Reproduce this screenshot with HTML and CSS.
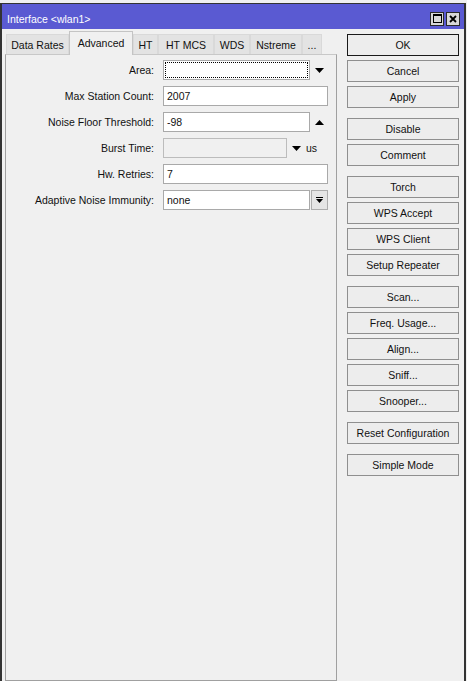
FILE: index.html
```html
<!DOCTYPE html>
<html>
<head>
<meta charset="utf-8">
<title>Interface &lt;wlan1&gt;</title>
<link rel="stylesheet" href="styles.css">
</head>
<body>
<div class="window">
  <div class="titlebar">
    <span class="title">Interface &lt;wlan1&gt;</span>
    <div class="wbtns">
      <span class="wbtn"><svg width="9" height="9" viewBox="0 0 9 9"><rect x="0.5" y="0.5" width="8" height="8" fill="none" stroke="#000"/><rect x="0" y="0" width="9" height="2" fill="#000"/></svg></span>
      <span class="wbtn"><svg width="8" height="8" viewBox="0 0 8 8"><path d="M1 1L7 7M7 1L1 7" stroke="#000" stroke-width="1.8"/></svg></span>
    </div>
  </div>
  <div class="body">
    <div class="left">
      <div class="tabs">
        <div class="tab t-rates">Data Rates</div>
        <div class="tab active t-adv">Advanced</div>
        <div class="tab t-ht">HT</div>
        <div class="tab t-mcs">HT MCS</div>
        <div class="tab t-wds">WDS</div>
        <div class="tab t-nst">Nstreme</div>
        <div class="tab t-more">...</div>
      </div>
      <div class="panel">
        <div class="row">
          <span class="lbl">Area:</span>
          <div class="box combo w-short"><span class="focus"></span></div>
          <span class="arrow"><svg width="9" height="5" viewBox="0 0 9 5"><path d="M0 0H9L4.5 5Z"/></svg></span>
        </div>
        <div class="row">
          <span class="lbl">Max Station Count:</span>
          <div class="box w-full">2007</div>
        </div>
        <div class="row">
          <span class="lbl">Noise Floor Threshold:</span>
          <div class="box w-short">-98</div>
          <span class="arrow"><svg width="9" height="5" viewBox="0 0 9 5"><path d="M0 5H9L4.5 0Z"/></svg></span>
        </div>
        <div class="row">
          <span class="lbl">Burst Time:</span>
          <div class="box disabled w-burst"></div>
          <span class="arrow"><svg width="9" height="5" viewBox="0 0 9 5"><path d="M0 0H9L4.5 5Z"/></svg></span>
          <span class="unit">us</span>
        </div>
        <div class="row">
          <span class="lbl">Hw. Retries:</span>
          <div class="box w-full">7</div>
        </div>
        <div class="row">
          <span class="lbl">Adaptive Noise Immunity:</span>
          <div class="box w-select">none</div>
          <span class="ddbtn"><svg width="7" height="7" viewBox="0 0 7 7"><rect x="0" y="0" width="7" height="1"/><path d="M0 2H7L3.5 6Z"/></svg></span>
        </div>
      </div>
    </div>
    <div class="right">
      <div class="group">
        <div class="btn default">OK</div>
        <div class="btn">Cancel</div>
        <div class="btn">Apply</div>
      </div>
      <div class="group">
        <div class="btn">Disable</div>
        <div class="btn">Comment</div>
      </div>
      <div class="group">
        <div class="btn">Torch</div>
        <div class="btn">WPS Accept</div>
        <div class="btn">WPS Client</div>
        <div class="btn">Setup Repeater</div>
      </div>
      <div class="group">
        <div class="btn">Scan...</div>
        <div class="btn">Freq. Usage...</div>
        <div class="btn">Align...</div>
        <div class="btn">Sniff...</div>
        <div class="btn">Snooper...</div>
      </div>
      <div class="group">
        <div class="btn">Reset Configuration</div>
      </div>
      <div class="group">
        <div class="btn">Simple Mode</div>
      </div>
    </div>
  </div>
</div>
</body>
</html>
```

FILE: styles.css
```css
html, body {
  margin: 0;
  padding: 0;
  background: #f0f0f0;
  height: 681px;
  overflow: hidden;
}

body {
  font-family: "Liberation Sans", Arial, sans-serif;
  font-size: 10.5px;
  color: #111;
}

.window {
  margin-top: 3px;
  width: 466px;
  height: 678px;
  box-sizing: border-box;
  border: 2px solid #333333;
  border-top-width: 1px;
  border-bottom: none;
  display: flex;
  flex-direction: column;
  background: #f0f0f0;
}

.titlebar {
  height: 25px;
  box-sizing: border-box;
  padding: 7px 4px 3px 5px;
  background: #5a5ad2;
  color: #fff;
  display: flex;
  align-items: center;
  justify-content: space-between;
  flex: none;
}

.title {
  font-size: 10.5px;
}

.wbtns {
  display: flex;
  gap: 2px;
}

.wbtn {
  width: 14px;
  height: 14px;
  box-sizing: border-box;
  border: 1px solid #2a2a2a;
  background: #d8d8d8;
  display: flex;
  align-items: center;
  justify-content: center;
}

.body {
  display: flex;
  flex: 1;
}

.left {
  margin-left: 3px;
  width: 332px;
  display: flex;
  flex-direction: column;
}

.tabs {
  height: 25px;
  box-sizing: border-box;
  padding-left: 1px;
  display: flex;
  align-items: flex-end;
  flex: none;
}

.tab {
  height: 20px;
  box-sizing: border-box;
  border: 1px solid #d9d9d9;
  border-bottom: none;
  background: #e3e3e3;
  display: flex;
  align-items: center;
  justify-content: center;
  white-space: nowrap;
}

.tab.active {
  height: 24px;
  margin-bottom: -1px;
  padding-bottom: 2px;
  background: #f0f0f0;
  border-color: #c4c4c4;
  position: relative;
  z-index: 1;
}

.t-rates { width: 63px; }
.t-adv { width: 64px; }
.t-ht { width: 25px; }
.t-mcs { width: 56px; }
.t-wds { width: 36px; }
.t-nst { width: 52px; }
.t-more { width: 20px; }

.panel {
  flex: 1;
  border: 1px solid #a0a0a0;
  border-top-color: #c8c8c8;
  padding-top: 5px;
}

.row {
  display: flex;
  align-items: center;
  height: 20px;
  margin-bottom: 6px;
}

.lbl {
  width: 148px;
  margin-right: 9px;
  text-align: right;
  white-space: nowrap;
}

.box {
  height: 20px;
  box-sizing: border-box;
  border: 1px solid #a9a9a9;
  background: #fff;
  padding-left: 3px;
  display: flex;
  align-items: center;
}

.box.disabled {
  background: #f0f0f0;
  border-color: #bcbcbc;
}

.box.combo {
  padding: 1px;
}

.focus {
  flex: 1;
  align-self: stretch;
  border: 1px dotted #000;
}

.w-full { width: 165px; }
.w-short { width: 147px; }
.w-select { width: 147px; }
.w-burst { width: 124px; }

.arrow {
  width: 18px;
  height: 20px;
  display: flex;
  align-items: center;
  justify-content: center;
}

.unit {
  margin-left: 1px;
}

.ddbtn {
  width: 17px;
  height: 20px;
  margin-left: 1px;
  box-sizing: border-box;
  border: 1px solid #adadad;
  background: #e5e5e5;
  display: flex;
  align-items: center;
  justify-content: center;
}

.right {
  padding: 5px 0 0 10px;
  width: 112px;
  display: flex;
  flex-direction: column;
}

.group {
  margin-bottom: 6px;
}

.btn {
  height: 22px;
  box-sizing: border-box;
  border: 1px solid #8f8f8f;
  background: #ededed;
  display: flex;
  align-items: center;
  justify-content: center;
  margin-bottom: 4px;
  white-space: nowrap;
}

.btn.default {
  border-color: #1a1a1a;
}
```
